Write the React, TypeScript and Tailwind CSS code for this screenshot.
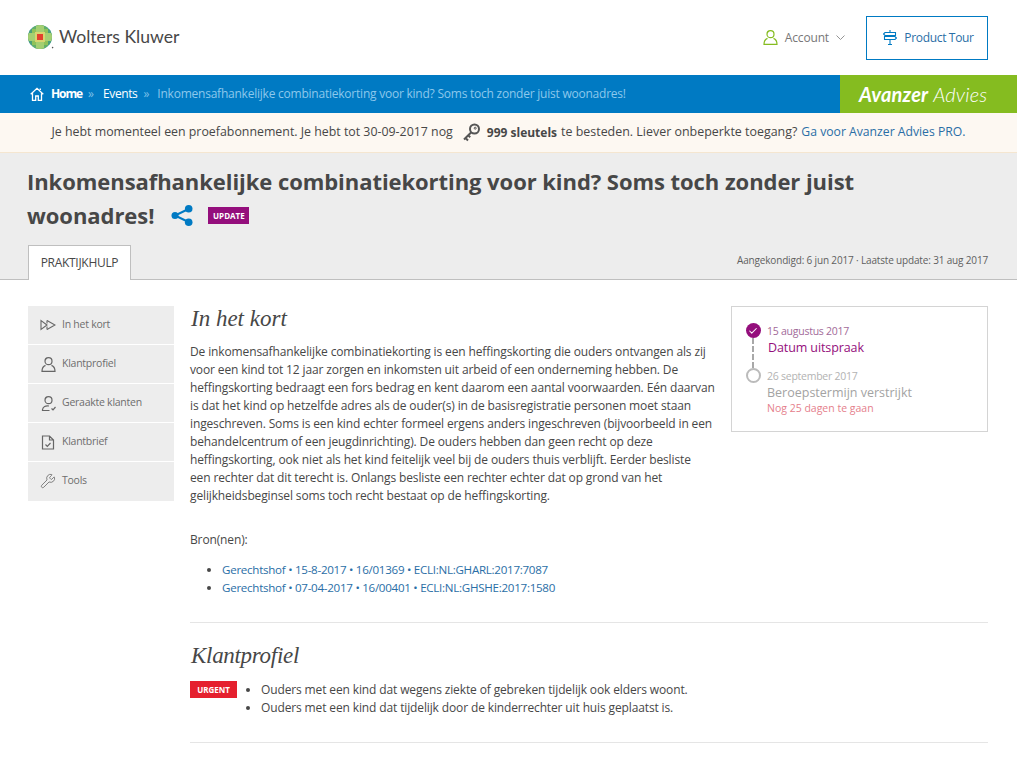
import { Check, Wrench } from "lucide-react";

const SANS = "font-['Open_Sans','Noto_Sans',sans-serif]";

const bodyLines = [
  "De inkomensafhankelijke combinatiekorting is een heffingskorting die ouders ontvangen als zij",
  "voor een kind tot 12 jaar zorgen en inkomsten uit arbeid of een onderneming hebben. De",
  "heffingskorting bedraagt een fors bedrag en kent daarom een aantal voorwaarden. Eén daarvan",
  "is dat het kind op hetzelfde adres als de ouder(s) in de basisregistratie personen moet staan",
  "ingeschreven. Soms is een kind echter formeel ergens anders ingeschreven (bijvoorbeeld in een",
  "behandelcentrum of een jeugdinrichting). De ouders hebben dan geen recht op deze",
  "heffingskorting, ook niet als het kind feitelijk veel bij de ouders thuis verblijft. Eerder besliste",
  "een rechter dat dit terecht is. Onlangs besliste een rechter echter dat op grond van het",
  "gelijkheidsbeginsel soms toch recht bestaat op de heffingskorting.",
];

const Logo = () => (
  <svg width="26" height="25" viewBox="0 0 26 25" className="block">
    <defs>
      <clipPath id="globe">
        <circle cx="12" cy="12" r="12" />
      </clipPath>
    </defs>
    <g clipPath="url(#globe)">
      <rect width="24" height="24" fill="#3b93b8" />
      <rect x="0" y="4" width="24" height="16" fill="#4aa07a" />
      <rect x="4" y="0" width="16" height="24" fill="#62b06a" />
      <rect x="4" y="4" width="16" height="16" fill="#8fc25a" />
      <rect x="8" y="0" width="8" height="24" fill="#a4cf72" />
      <rect x="0" y="8" width="24" height="8" fill="#a4cf72" />
      <rect x="7" y="7" width="10" height="10" fill="#d8d470" />
      <rect x="9" y="9" width="6" height="6" fill="#e2402e" />
    </g>
    <circle cx="24.6" cy="22.6" r="0.8" fill="#555" />
  </svg>
);

const PersonIcon = ({ color, check = false }: { color: string; check?: boolean }) => (
  <svg width="15" height="15" viewBox="0 0 15 15" fill="none" stroke={color} strokeWidth="1.2">
    <circle cx="7.5" cy="4.2" r="3.5" />
    {check ? (
      <>
        <path d="M8 10c-3.500-.6-6 .6-6.500 3.700V14.500h7" />
        <path d="M10.500 12.500l1.500 1.300 2.500-2.800" />
      </>
    ) : (
      <path d="M4.500 8.400C2.300 9.200 1 11 1 14.400h13c0-3.400-1.300-5.200-3.500-6" />
    )}
  </svg>
);

const HomeGlyph = () => (
  <svg width="14" height="14" viewBox="0 0 14 14" fill="none" stroke="#fff" strokeWidth="1.3">
    <path d="M.7 7.300 7 1.300l6.300 6M2.500 6.300v7h3.200V9h2.600v4.300h3.200v-7M10.300 3V1.500" />
  </svg>
);

const SignpostGlyph = () => (
  <svg width="14" height="15" viewBox="0 0 14 15" fill="none" stroke="#007ac3" strokeWidth="1.1">
    <path d="M7 0v2M7 10v5M5 14.500h4" />
    <path d="M2 2.500h10.500v3H2L.5 4zM1.500 6.500h10.500L13.500 8 12 9.500H1.500z" />
  </svg>
);

const ShareGlyph = () => (
  <svg width="22" height="21" viewBox="0 0 22 21" fill="#007ac3" stroke="#007ac3">
    <path d="M17.500 4 4 10.500l13.500 6.500" fill="none" strokeWidth="2" />
    <circle cx="4" cy="10.500" r="3.500" stroke="none" />
    <circle cx="17.700" cy="3.800" r="3.800" stroke="none" />
    <circle cx="17.700" cy="17.200" r="3.800" stroke="none" />
  </svg>
);

const KeyIcon = () => (
  <svg width="19" height="19" viewBox="0 0 19 19" fill="none" stroke="#555" strokeWidth="2">
    <circle cx="12.500" cy="6" r="4.500" />
    <circle cx="13.200" cy="5.200" r="1" strokeWidth="1" />
    <path d="M9.300 9.300 2 16.500M3.500 15l2.500 2.500M6.200 12.300l2 2" />
  </svg>
);

const FastForward = () => (
  <svg width="16" height="12" viewBox="0 0 16 12" fill="none" stroke="#666" strokeWidth="1.1">
    <path d="M1 1.500v9L7 6ZM7 1.500 15 6l-8 4.500" />
    <path d="M7 1.500v3M7 7.500v3" />
  </svg>
);

const LetterIcon = () => (
  <svg width="14" height="15" viewBox="0 0 14 15" fill="none" stroke="#666" strokeWidth="1.2">
    <path d="M1.500 1h7l4 4v9h-11zM8.500 1v4h4" />
    <path d="m4.500 9.500 1.800 1.800 3.200-3.300" />
  </svg>
);

const ChevronGlyph = () => (
  <svg width="9" height="5" viewBox="0 0 9 5" fill="none" stroke="#888" strokeWidth="0.9">
    <path d="m.5.500 4 4 4-4" />
  </svg>
);

const navItems = [
  { label: "In het kort", icon: <FastForward /> },
  { label: "Klantprofiel", icon: <PersonIcon color="#666" /> },
  { label: "Geraakte klanten", icon: <PersonIcon color="#666" check /> },
  { label: "Klantbrief", icon: <LetterIcon /> },
  { label: "Tools", icon: <Wrench size={16} strokeWidth={1.2} color="#666" /> },
];

const App = () => {
  return (
    <div className={`${SANS} w-[1017px] h-[763px] overflow-hidden bg-white text-[#474747] text-[12px]`}>
      <header className="h-[75px] flex items-center justify-between pl-7 pr-[29px]">
        <div className="flex items-center gap-[5px]">
          <Logo />
          <span className="font-['Lato',sans-serif] text-[17.6px] text-[#474747]">Wolters Kluwer</span>
        </div>
        <div className="flex items-center">
          <PersonIcon color="#85bc20" />
          <span className="ml-[7px] text-[#777] tracking-[-0.15px]">Account</span>
          <span className="ml-[7px] mr-[21px]">
            <ChevronGlyph />
          </span>
          <button className="w-[122px] h-[44px] border border-[#007ac3] pl-[3px] flex items-center justify-center gap-[7px] text-[#2a6ea6] tracking-[-0.33px]">
            <SignpostGlyph />
            Product Tour
          </button>
        </div>
      </header>

      <div className="h-[38px] flex bg-[#007ac3]">
        <div className="flex-1 flex items-center pl-[30px] text-white whitespace-nowrap">
          <HomeGlyph />
          <b className="ml-[7px] tracking-[-1.1px]">Home</b>
          <span className="ml-[6px] text-[#7cc0e8]">»</span>
          <span className="ml-[9px] tracking-[-0.4px]">Events</span>
          <span className="ml-[6px] text-[#7cc0e8]">»</span>
          <span className="ml-[8px] text-[#8cc8ec] tracking-[-0.23px]">Inkomensafhankelijke combinatiekorting voor kind? Soms toch zonder juist woonadres!</span>
        </div>
        <div className="w-[177px] bg-[#85bc20] flex items-center pl-[19px] text-white text-[20px] italic whitespace-nowrap font-['Lato',sans-serif] tracking-[0.15px]">
          <b className="mr-[5px]">Avanzer</b>
          <span className="font-light">Advies</span>
        </div>
      </div>

      <div className="h-[40px] bg-[#fdf8f2] border-b border-[#f5e6d0] flex items-center justify-center whitespace-nowrap text-[#474747]">
        <span className="text-[12.37px]">Je hebt momenteel een proefabonnement. Je hebt tot 30-09-2017 nog</span>
        <span className="ml-[9px] mr-[6px]">
          <KeyIcon />
        </span>
        <b>999 sleutels</b>
        <span className="ml-1 text-[12.45px]">te besteden. Liever onbeperkte toegang?</span>
        <a className="ml-1 text-[12.2px] text-[#2a6ea6]">Ga voor Avanzer Advies PRO.</a>
      </div>

      <div className="h-[127px] bg-[#ededed] border-b border-[#bfbfbf] px-7 pr-[29px] flex flex-col">
        <h1 className="mt-[11px] -ml-px text-[22px] leading-[34px] font-bold text-[#474747] whitespace-nowrap tracking-[-0.06px]">
          Inkomensafhankelijke combinatiekorting voor kind? Soms toch zonder juist
          <br />
          <span className="inline-flex items-center">
            woonadres!
            <span className="ml-[17px]">
              <ShareGlyph />
            </span>
            <span className="ml-[15px] w-[41px] h-[17px] bg-[#940e7c] text-white text-[8px] leading-[17px] text-center font-bold tracking-normal">UPDATE</span>
          </span>
        </h1>
        <div className="mt-auto flex items-end justify-between">
          <div className="w-[103px] h-[35px] -mb-px bg-white border border-b-0 border-[#bfbfbf] flex items-center justify-center text-[#474747] tracking-[-0.3px]">
            PRAKTIJKHULP
          </div>
          <div className="text-[10px] mb-[11px] text-[#5f5f5f] tracking-[-0.16px]">Aangekondigd: 6 jun 2017 · Laatste update: 31 aug 2017</div>
        </div>
      </div>

      <div className="flex pl-7 pr-[29px] pt-[26px] gap-[16px]">
        <nav className="w-[146px] shrink-0 self-start flex flex-col gap-px">
          {navItems.map((item) => (
            <div key={item.label} className="h-[38px] last:h-[39px] last:pb-px bg-[#ededed] flex items-center text-[10.5px] tracking-[-0.25px] text-[#6d6d6d]">
              <span className="w-[34px] flex justify-center pl-[6px]">{item.icon}</span>
              {item.label}
            </div>
          ))}
        </nav>

        <main className="flex-1 min-w-0">
          <div className="flex justify-between">
            <div className="w-[525px]">
              <h2 className="ml-px font-['Liberation_Serif',serif] italic text-[23px] leading-[26px] text-[#474747]">In het kort</h2>
              <p className="mt-[11px] leading-[18px] whitespace-nowrap tracking-[-0.13px]">
                {bodyLines.map((line) => (
                  <span key={line} className="block">
                    {line}
                  </span>
                ))}
              </p>
              <p className="mt-[26px] tracking-[-0.13px]">Bron(nen):</p>
              <ul className="mt-[12px] ml-8 list-disc leading-[18px] text-[11.6px] tracking-[-0.28px] text-[#2a6ea6] marker:text-[#474747] whitespace-nowrap">
                <li>Gerechtshof • 15-8-2017 • 16/01369 • ECLI:NL:GHARL:2017:7087</li>
                <li>Gerechtshof • 07-04-2017 • 16/00401 • ECLI:NL:GHSHE:2017:1580</li>
              </ul>
            </div>
            <aside className="w-[257px] h-[126px] border border-[#d4d4d4] pl-[13px] pt-[16px] flex gap-[6px]">
              <div className="flex flex-col items-center w-[16px] shrink-0">
                <span className="w-[15px] h-[15px] rounded-full bg-[#940e7c] flex items-center justify-center">
                  <Check size={10} color="#fff" strokeWidth={2.5} />
                </span>
                <span className="h-[30px] border-l-2 border-dashed border-[#a8a8a8]" />
                <span className="w-[15px] h-[15px] rounded-full border-2 border-[#bbb]" />
              </div>
              <div>
                <div className="text-[10.5px] leading-[16px] tracking-[-0.25px] text-[#a26a99]">15 augustus 2017</div>
                <div className="text-[12.5px] leading-[18px] tracking-[-0.1px] text-[#940e7c] ml-px">Datum uitspraak</div>
                <div className="mt-[11px] text-[10.5px] leading-[16px] tracking-[-0.25px] text-[#b3b3b3]">26 september 2017</div>
                <div className="text-[12.5px] leading-[18px] text-[#a3a3a3]">Beroepstermijn verstrijkt</div>
                <div className="text-[10.5px] leading-[13px] text-[#e5808c]">Nog 25 dagen te gaan</div>
              </div>
            </aside>
          </div>

          <div className="mt-[25px] border-t border-[#e5e5e5] pt-[20px]">
            <h2 className="ml-px font-['Liberation_Serif',serif] italic text-[23px] leading-[26px] tracking-[-0.3px] text-[#474747]">Klantprofiel</h2>
            <div className="mt-[12px] flex items-start">
              <span className="w-[47px] h-[17px] bg-[#e5202e] text-white text-[8px] leading-[17px] text-center font-bold">URGENT</span>
              <ul className="ml-[24px] list-disc leading-[18px] tracking-[-0.13px]">
                <li>Ouders met een kind dat wegens ziekte of gebreken tijdelijk ook elders woont.</li>
                <li>Ouders met een kind dat tijdelijk door de kinderrechter uit huis geplaatst is.</li>
              </ul>
            </div>
          </div>
          <div className="mt-[25px] border-t border-[#e5e5e5]" />
        </main>
      </div>
    </div>
  );
};

export default App;
